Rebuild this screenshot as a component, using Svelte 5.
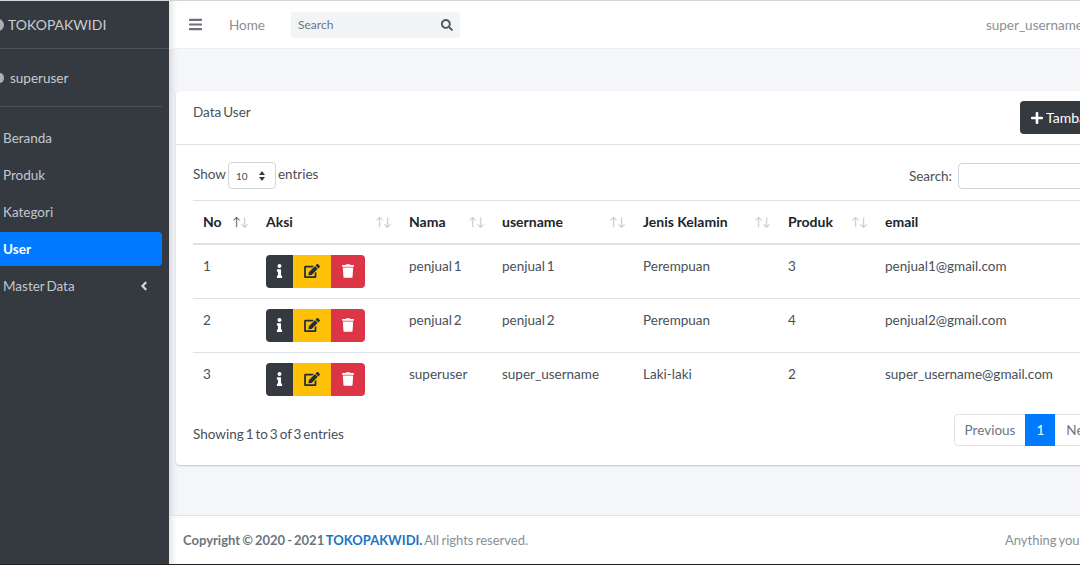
<script>
  const menu = [
    { label: 'Beranda' },
    { label: 'Produk' },
    { label: 'Kategori' },
    { label: 'User', active: true },
    { label: 'Master Data', caret: true }
  ];
  const cols = ['No', 'Aksi', 'Nama', 'username', 'Jenis Kelamin', 'Produk', 'email'];
  const rows = [
    { no: 1, nama: 'penjual 1', username: 'penjual 1', jk: 'Perempuan', produk: 3, email: 'penjual1@gmail.com' },
    { no: 2, nama: 'penjual 2', username: 'penjual 2', jk: 'Perempuan', produk: 4, email: 'penjual2@gmail.com' },
    { no: 3, nama: 'superuser', username: 'super_username', jk: 'Laki-laki', produk: 2, email: 'super_username@gmail.com' }
  ];
</script>

<div class="page">
  <aside class="sidebar">
    <div class="brand"><span class="dot"></span><span class="brand-text">TOKOPAKWIDI</span></div>
    <div class="userpanel"><span class="dot small"></span><span>superuser</span></div>
    <nav class="menu">
      {#each menu as m}
        <div class="item" class:active={m.active}>
          <span>{m.label}</span>
          {#if m.caret}
            <svg class="caret" viewBox="0 0 256 512"><path fill="currentColor" d="M31.7 239l136-136c9.4-9.4 24.6-9.4 33.9 0l22.6 22.6c9.4 9.4 9.4 24.6 0 33.9L127.9 256l96.4 96.4c9.4 9.4 9.4 24.6 0 33.9L201.7 409c-9.4 9.4-24.6 9.4-33.9 0l-136-136c-9.5-9.4-9.5-24.6-.1-34z"/></svg>
          {/if}
        </div>
      {/each}
    </nav>
  </aside>

  <div class="main">
    <header class="navbar">
      <svg class="bars" viewBox="0 0 448 512"><path fill="currentColor" d="M16 132h416c8.8 0 16-7.2 16-16V76c0-8.800-7.200-16-16-16H16C7.200 60 0 67.200 0 76v40c0 8.800 7.200 16 16 16zm0 160h416c8.800 0 16-7.200 16-16v-40c0-8.800-7.200-16-16-16H16c-8.800 0-16 7.200-16 16v40c0 8.800 7.200 16 16 16zm0 160h416c8.800 0 16-7.200 16-16v-40c0-8.800-7.200-16-16-16H16c-8.800 0-16 7.200-16 16v40c0 8.800 7.200 16 16 16z"/></svg>
      <span class="home">Home</span>
      <div class="navsearch">
        <span>Search</span>
        <svg viewBox="0 0 512 512"><path fill="currentColor" d="M505 442.700L405.300 343c-4.500-4.500-10.600-7-17-7H372c27.600-35.300 44-79.700 44-128C416 93.100 322.900 0 208 0S0 93.100 0 208s93.100 208 208 208c48.300 0 92.700-16.400 128-44v16.300c0 6.400 2.500 12.500 7 17l99.700 99.700c9.400 9.400 24.600 9.400 33.900 0l28.300-28.300c9.400-9.400 9.400-24.600.1-34zM208 336c-70.700 0-128-57.200-128-128 0-70.700 57.200-128 128-128 70.700 0 128 57.200 128 128 0 70.700-57.200 128-128 128z"/></svg>
      </div>
      <span class="navuser">super_username</span>
    </header>

    <section class="content">
      <div class="card">
        <div class="card-head">
          <span class="card-title">Data User</span>
          <div class="add">
            <svg viewBox="0 0 448 512"><path fill="currentColor" d="M416 208H272V64c0-17.670-14.330-32-32-32h-32c-17.670 0-32 14.330-32 32v144H32c-17.670 0-32 14.330-32 32v32c0 17.670 14.330 32 32 32h144v144c0 17.670 14.330 32 32 32h32c17.670 0 32-14.330 32-32V304h144c17.670 0 32-14.330 32-32v-32c0-17.670-14.330-32-32-32z"/></svg>
            <span>Tambah</span>
          </div>
        </div>
        <div class="card-body">
          <div class="controls">
            <div class="show">
              <span class="raise">Show</span>
              <div class="select"><span>10</span><span class="updown"><i class="up"></i><i class="down"></i></span></div>
              <span class="raise">entries</span>
            </div>
            <div class="filter"><span>Search:</span><div class="input"></div></div>
          </div>

          <table>
            <thead>
              <tr>
                {#each cols as c, i}
                  <th>
                    <div class="th"><span>{c}</span><span class="sort"><b class:on={i === 0}>↑</b><b>↓</b></span></div>
                  </th>
                {/each}
              </tr>
            </thead>
            <tbody>
              {#each rows as r}
                <tr>
                  <td>{r.no}</td>
                  <td>
                    <div class="btns">
                      <span class="btn dark"><svg class="i-info" viewBox="0 0 192 512"><path fill="currentColor" d="M20 424.229h20V279.771H20c-11.046 0-20-8.954-20-20V212c0-11.046 8.954-20 20-20h112c11.046 0 20 8.954 20 20v212.229h20c11.046 0 20 8.954 20 20V492c0 11.046-8.954 20-20 20H20c-11.046 0-20-8.954-20-20v-47.771c0-11.046 8.954-20 20-20zM96 0C56.235 0 24 32.235 24 72s32.235 72 72 72 72-32.235 72-72S135.764 0 96 0z"/></svg></span>
                      <span class="btn yellow"><svg class="i-edit" viewBox="0 0 576 512"><path fill="currentColor" d="M402.600 83.200l90.200 90.200c3.800 3.800 3.800 10 0 13.800L274.400 405.600l-92.800 10.300c-12.400 1.400-22.900-9.100-21.500-21.500l10.300-92.800L388.800 83.200c3.800-3.800 10-3.800 13.800 0zm162-22.900l-48.800-48.800c-15.200-15.200-39.900-15.200-55.200 0l-35.400 35.400c-3.800 3.800-3.800 10 0 13.800l90.200 90.200c3.800 3.800 10 3.800 13.800 0l35.400-35.400c15.200-15.300 15.200-40 0-55.200zM384 346.200V448H64V128h229.800c3.200 0 6.200-1.300 8.500-3.500l40-40c7.600-7.600 2.200-20.500-8.500-20.500H48C21.500 64 0 85.500 0 112v352c0 26.500 21.500 48 48 48h352c26.500 0 48-21.500 48-48V306.200c0-10.700-12.900-16-20.500-8.500l-40 40c-2.200 2.300-3.500 5.300-3.500 8.500z"/></svg></span>
                      <span class="btn red"><svg class="i-trash" viewBox="0 0 448 512"><path fill="currentColor" d="M432 32H312l-9.400-18.700A24 24 0 0 0 281.100 0H166.800a23.720 23.720 0 0 0-21.400 13.300L136 32H16A16 16 0 0 0 0 48v32a16 16 0 0 0 16 16h416a16 16 0 0 0 16-16V48a16 16 0 0 0-16-16zM53.200 467a48 48 0 0 0 47.900 45h245.800a48 48 0 0 0 47.900-45L416 128H32z"/></svg></span>
                    </div>
                  </td>
                  <td>{r.nama}</td>
                  <td>{r.username}</td>
                  <td>{r.jk}</td>
                  <td>{r.produk}</td>
                  <td>{r.email}</td>
                </tr>
              {/each}
            </tbody>
          </table>

          <div class="foot">
            <span>Showing 1 to 3 of 3 entries</span>
            <div class="pager"><span class="pg">Previous</span><span class="pg cur">1</span><span class="pg next">Next</span></div>
          </div>
        </div>
      </div>
    </section>

    <footer class="footer">
      <span><b>Copyright © 2020 - 2021 <em>TOKOPAKWIDI.</em></b> All rights reserved.</span>
      <span class="any">Anything you want</span>
    </footer>
  </div>
</div>

<style>
  :global(body) { margin: 0; background: #fff; }
  .page {
    width: 1080px; height: 565px; overflow: hidden;
    display: flex;
    font-family: Lato, "Liberation Sans", sans-serif;
    font-size: 13.5px; word-spacing: -1.5px; color: #495057;
    border-top: 1px solid #d5d5d5; border-bottom: 1px solid #222; box-sizing: border-box;
  }
  .sidebar { width: 169px; flex: none; background: #343a40; color: #c2c7d0; }
  .brand { height: 47px; display: flex; align-items: center; gap: 4px; border-bottom: 1px solid #4b545c; font-size: 14px; color: #c9ccd0; margin-left: -8px; }
  .brand .dot { width: 12px; height: 12px; }
  .dot { width: 10px; height: 10px; border-radius: 50%; background: #aab0b5; flex: none; }
  .dot.small { width: 8px; height: 10px; }
  .userpanel { height: 57px; margin: 0 7px 0 -4px; display: flex; align-items: center; gap: 6px; border-bottom: 1px solid #4b545c; color: #c9ccd0; }
  .menu { padding: 14px 7px 0 0; display: flex; flex-direction: column; gap: 3px; }
  .item { height: 34px; display: flex; align-items: center; justify-content: space-between; padding: 0 13px 0 3px; border-radius: 0 4px 4px 0; }
  .item.active { background: #007bff; color: #fff; font-weight: 700; }
  .caret { width: 10px; height: 14px; color: #d5d8dc; }

  .main { width: 953px; flex: none; display: flex; flex-direction: column; background: #f4f6f9; box-shadow: inset 7px 0 6px -4px #d6d8da; }
  .navbar { height: 48px; box-sizing: border-box; flex: none; background: #fff; display: flex; align-items: center; padding: 0 0 0 20px; border-bottom: 1px solid #eceef0; box-shadow: inset 7px 0 6px -4px #e0e2e4; color: #8a9095; }
  .bars { width: 13px; height: 15px; color: #6c7278; }
  .home { margin-left: 27px; }
  .navsearch { margin-left: 26px; width: 169px; height: 26px; box-sizing: border-box; padding: 0 7px 0 7px; background: #f2f4f6; border-radius: 3px; display: flex; align-items: center; justify-content: space-between; font-size: 12px; color: #6c757d; }
  .navsearch svg { width: 12px; height: 12px; color: #51585e; }
  .navuser { margin-left: auto; margin-right: 39px; }

  .content { flex: 1; min-height: 0; padding: 42px 0 0 7px; }
  .card { width: 946px; height: 374px; box-sizing: border-box; background: #fff; border-radius: 4px; box-shadow: 0 1px 2px rgba(0,0,0,.2); }
  .card-head { height: 54px; box-sizing: border-box; border-bottom: 1px solid #dfe1e3; display: flex; justify-content: space-between; padding: 10px 17px 0; }
  .card-title { margin-top: 3px; }
  .add { width: 85px; height: 33px; box-sizing: border-box; background: #343a40; border-radius: 4px; color: #fff; display: flex; align-items: center; gap: 3px; padding-left: 11px; font-size: 14px; }
  .add svg { width: 12px; height: 14px; }
  .card-body { padding: 17px 17px 0; }
  .controls { display: flex; justify-content: space-between; align-items: center; height: 27px; margin-bottom: 11px; }
  .show { display: flex; align-items: center; gap: 2px; }
  .raise { margin-bottom: 4px; }
  .select { width: 48px; height: 27px; box-sizing: border-box; border: 1px solid #ced4da; border-radius: 4px; display: flex; align-items: center; justify-content: space-between; padding: 0 10px 0 7px; font-size: 10px; }
  .updown { display: flex; flex-direction: column; gap: 2px; }
  .up, .down { display: block; width: 0; height: 0; border-left: 3.5px solid transparent; border-right: 3.5px solid transparent; }
  .up { border-bottom: 4px solid #343a40; }
  .down { border-top: 4px solid #343a40; }
  .filter { display: flex; align-items: center; gap: 6px; }
  .input { width: 147px; height: 26px; box-sizing: border-box; border: 1px solid #ced4da; border-radius: 4px; }

  table { width: 912px; table-layout: fixed; border-collapse: collapse; color: #495057; }
  th:nth-child(1) { width: 63px; }
  th:nth-child(2) { width: 143px; }
  th:nth-child(3) { width: 93px; }
  th:nth-child(4) { width: 141px; }
  th:nth-child(5) { width: 145px; }
  th:nth-child(6) { width: 97px; }
  th { height: 43px; padding: 0 8px 0 10px; box-sizing: border-box; text-align: left; border-top: 1px solid #dee2e6; border-bottom: 2px solid #dee2e6; color: #212529; font-size: 14px; word-spacing: 0; }
  .th { display: flex; justify-content: space-between; align-items: center; }
  .sort { color: #c4c8cc; font-weight: 400; font-size: 12px; letter-spacing: -1px; }
  .sort b { font-weight: 400; }
  .sort b.on { color: #555b60; }
  td { height: 54px; padding: 0 10px 10px; box-sizing: border-box; border-bottom: 1px solid #dee2e6; }
  tbody tr:last-child td { border-bottom: none; }
  .btns { display: flex; margin-top: 10px; }
  .btn { height: 33px; display: flex; align-items: center; justify-content: center; }
  .dark { width: 27px; background: #343a40; color: #fff; border-radius: 4px 0 0 4px; }
  .yellow { width: 38px; background: #ffc107; color: #1f2d3d; }
  .red { width: 34px; background: #dc3545; color: #fff; border-radius: 0 4px 4px 0; }
  .i-info { width: 7px; height: 14px; }
  .i-edit { width: 16px; height: 14px; }
  .i-trash { width: 12px; height: 14px; }
  .foot { display: flex; justify-content: space-between; align-items: flex-start; padding-top: 8px; }
  .foot > span { margin-top: 12px; }
  .pager { display: flex; height: 32px; border: 1px solid #dee2e6; border-radius: 4px; box-sizing: border-box; color: #6c757d; }
  .pg { padding: 0 10px; display: flex; align-items: center; }
  .next { padding: 0 9px 0 11px; }
  .cur { background: #007bff; color: #fff; margin: -1px 0; padding: 0 11px; }

  .footer { height: 49px; flex: none; background: #fff; border-top: 1px solid #dee2e6; box-sizing: border-box; display: flex; align-items: center; justify-content: space-between; padding: 0 0 0 14px; color: #869099; box-shadow: inset 7px 0 6px -4px #e0e2e4; font-size: 13px; word-spacing: -1.1px; }
  .footer b { color: #6c757d; }
  .footer em { font-style: normal; color: #1a73c4; }
  .any { margin-right: 12px; }
</style>
